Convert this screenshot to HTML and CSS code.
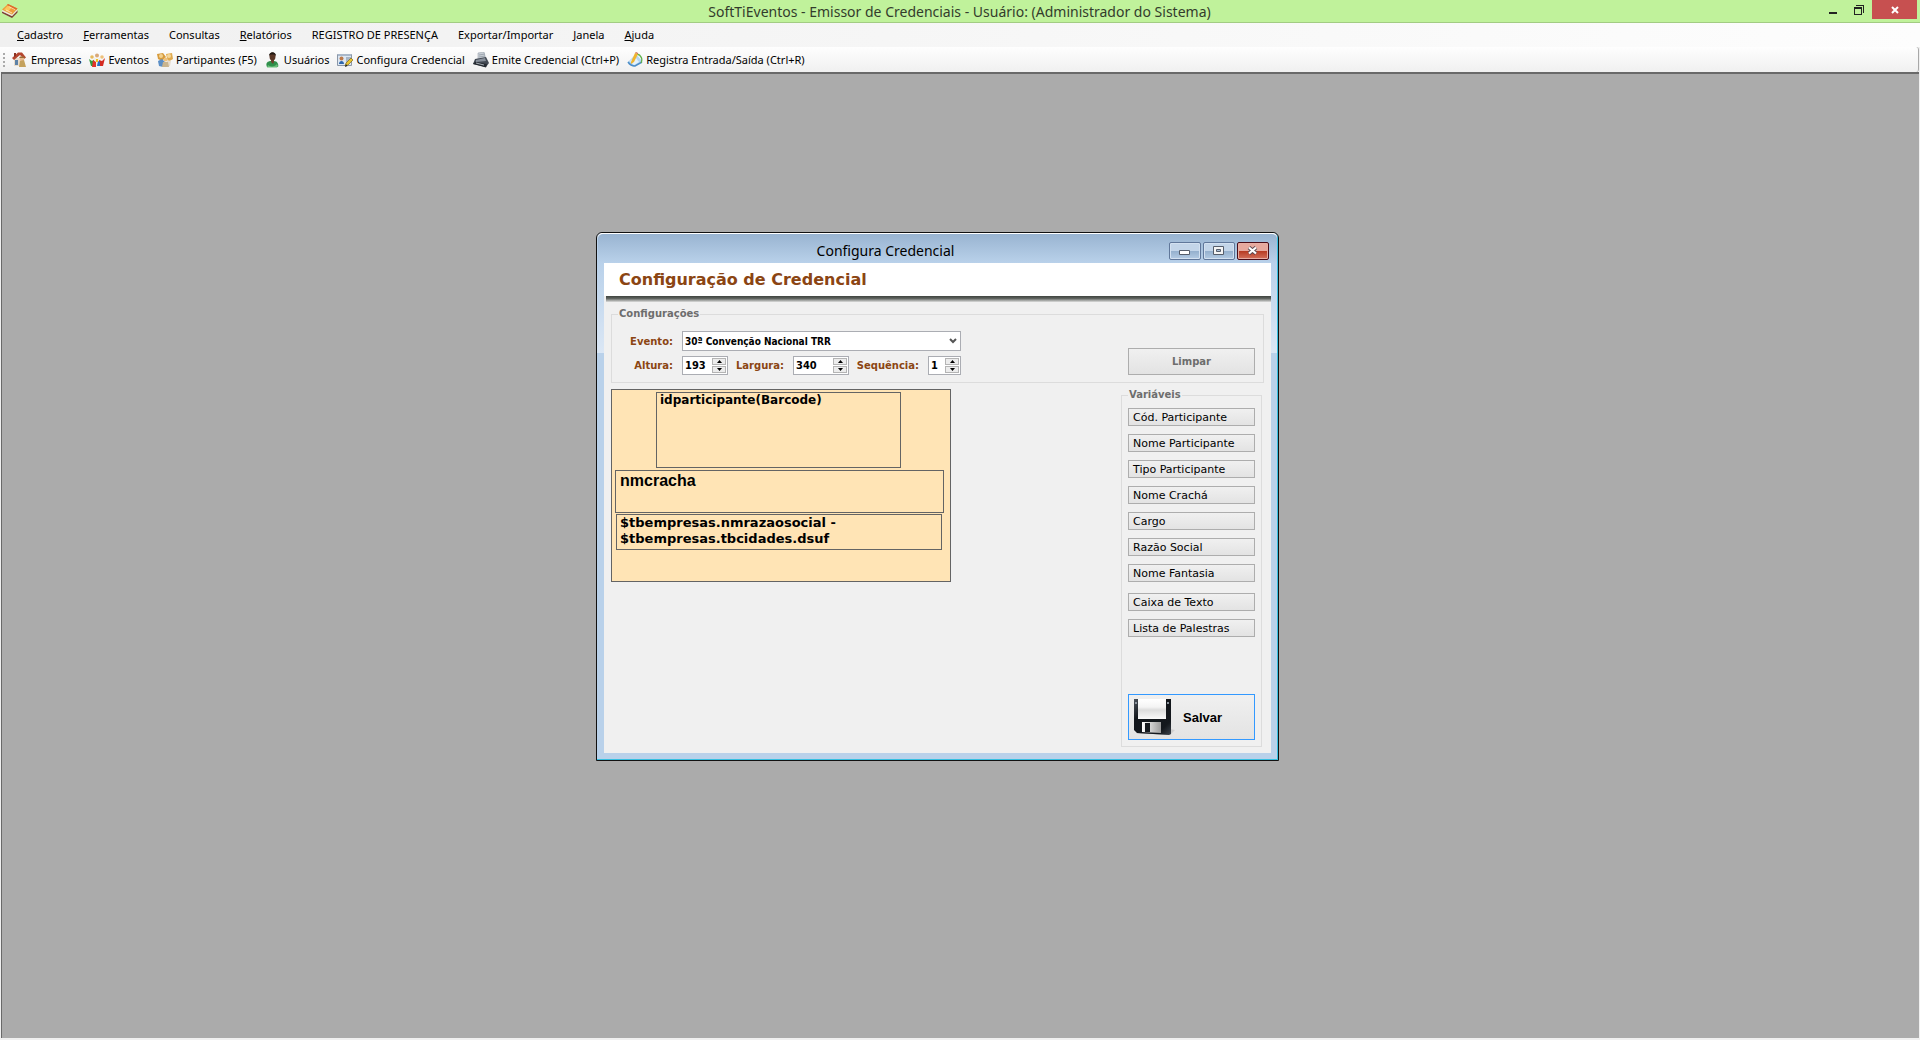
FILE: index.html
```html
<!DOCTYPE html>
<html lang="pt-BR">
<head>
<meta charset="utf-8">
<title>SoftTiEventos - Emissor de Credenciais</title>
<link rel="stylesheet" href="styles.css">
</head>
<body>
<div class="app">
  <header class="titlebar">
    <svg class="app-icon" viewBox="0 0 16 16" aria-hidden="true">
      <path d="M0 8l10 5 5.500-6v2.500L10 15 0 10z" fill="#7c4038"/>
      <path d="M0 7l10 4.500L15.500 6v1.500L10 13 0 8.500z" fill="#f4e2da"/>
      <path d="M0 6.500L6 1l9.500 4.500L10 11.500z" fill="#ee9d3c"/>
      <path d="M2 6.500l4-4 4 2-4 4z" fill="#fbc65c"/>
      <path d="M4 7l6 3M7 3.500l6 3" stroke="#fff0c8" stroke-width=".8"/>
      <path d="M6 1l9.500 4.500-1.200 1.300L5 2z" fill="#dd6b30"/>
    </svg>
    <h1 class="app-title">SoftTiEventos - Emissor de Credenciais - Usuário: (Administrador do Sistema)</h1>
    <div class="app-controls">
      <button class="app-btn" type="button" aria-label="Minimizar">
        <svg viewBox="0 0 10 10"><path d="M1 7h8v2H1z" fill="#222"/></svg>
      </button>
      <button class="app-btn" type="button" aria-label="Restaurar">
        <svg viewBox="0 0 10 10"><path d="M2 0h8v8H9V1H2z" fill="#222"/><path d="M0 2h8v8H0zm1 2v5h6V4z" fill="#222" fill-rule="evenodd"/></svg>
      </button>
      <button class="app-btn app-close" type="button" aria-label="Fechar">
        <svg viewBox="0 0 10 10"><path d="M2 2l6 6M8 2L2 8" stroke="#fff" stroke-width="2"/></svg>
      </button>
    </div>
  </header>

  <nav class="menubar">
    <a href="#"><u>C</u>adastro</a>
    <a href="#"><u>F</u>erramentas</a>
    <a href="#">Consultas</a>
    <a href="#"><u>R</u>elatórios</a>
    <a href="#">REGISTRO DE PRESENÇA</a>
    <a href="#">Exportar/Importar</a>
    <a href="#"><u>J</u>anela</a>
    <a href="#"><u>A</u>juda</a>
  </nav>

  <div class="toolbar">
    <span class="grip"></span>
    <button class="tool" type="button">
      <svg viewBox="0 0 16 16"><path d="M2 6h9v8H2z" fill="#e9dccb"/><path d="M0 6l6-5.500h4l4 5-2 1.500-4-4-6 5z" fill="#b5452e"/><path d="M2 1h2v3L2 5z" fill="#8c3324"/><path d="M3 8h3v5H3z" fill="#5d82a8"/><circle cx="10" cy="7" r="2.300" fill="#e8b98e"/><path d="M7 15l1-6 4-1 2 7z" fill="#c4a15c"/><path d="M8 4.500h4l1 1.500H7z" fill="#9c6b35"/></svg>
      Empresas</button>
    <button class="tool" type="button">
      <svg viewBox="0 0 16 16"><circle cx="3" cy="5" r="1.800" fill="#e5b95c"/><circle cx="8" cy="3.500" r="2" fill="#d8a878"/><circle cx="13" cy="5" r="1.800" fill="#eec07a"/><path d="M0 7l3 2 3-2-1 7H2z" fill="#2f9e3d"/><path d="M5 5l3 2 3-2 1 9H5z" fill="#f2efe6"/><path d="M10 8l3 1 3-3-2 8h-4z" fill="#d42a20"/><path d="M4 8l3 2v5H3z" fill="#e0342a"/><path d="M9 9l2 1v4H8z" fill="#2770c4"/><path d="M7 7h2v3H7z" fill="#f5c41c"/></svg>
      Eventos</button>
    <button class="tool" type="button">
      <svg viewBox="0 0 16 16"><path d="M0 2l6-1 3 4-4 4-4-2z" fill="#d79b3c"/><path d="M9 2l6-1 1 6-5 3z" fill="#e0aa4e"/><circle cx="4" cy="4" r="2" fill="#f3d190"/><circle cx="12" cy="4" r="2" fill="#f5d79a"/><path d="M1 9l4-2 3 3-2 5-4-1z" fill="#5b8ec6"/><path d="M10 8l4 1-1 5-4 1z" fill="#e7dccd"/><circle cx="8.500" cy="7.500" r="2" fill="#efc27d"/><path d="M6 10h5l1 5H5z" fill="#c9b48e"/></svg>
      Partipantes (F5)</button>
    <button class="tool" type="button">
      <svg viewBox="0 0 16 16"><path d="M2 15c-2-4 1-6 4-6h3c3 0 5 3 4 6z" fill="#2f8f4b"/><path d="M3 13c2 2 7 2 9-1l1 2-1 1.500H2z" fill="#69bd79"/><path d="M6 7h3v3l-1 2-2-2z" fill="#6e432d"/><ellipse cx="7.500" cy="4.500" rx="3" ry="4" fill="#5a3726"/><path d="M4 4c0-5 7-5 7 0L9.500 2.500h-4z" fill="#221812"/></svg>
      Usuários</button>
    <button class="tool" type="button">
      <svg viewBox="0 0 16 16"><path d="M.5 2.500h14v11H.5z" fill="#dde7f2" stroke="#8a97a8"/><path d="M1 2h13v2H1z" fill="#a9b8ca"/><circle cx="4.500" cy="6.500" r="2" fill="#bd7a4a"/><path d="M2 12c0-4 5-4 5 0z" fill="#2e66ad"/><path d="M9 6h5M9 8h4M9 10h3" stroke="#73849a"/><path d="M8 14l1-3 5-5 2 2-5 5z" fill="#e7c32f" stroke="#6f5b14" stroke-width=".6"/><path d="M8 15l1-3 1.500 2z" fill="#222"/></svg>
      Configura Credencial</button>
    <button class="tool" type="button">
      <svg viewBox="0 0 16 16"><path d="M5 1l6-1 2 8H5z" fill="#c9cfd6" stroke="#9aa3ad" stroke-width=".6"/><path d="M6 3l6-1M6 5l6-1" stroke="#8a949e" stroke-width=".7"/><path d="M2 7l11-2 3 6-3 4L0 12z" fill="#434a54"/><path d="M3 8l9-2 1 3-10 1z" fill="#878f9a"/><path d="M0 12l2-2 12 2-1 3.500z" fill="#252a31"/><path d="M3 11l8 2" stroke="#c9d0d7" stroke-width=".8"/></svg>
      Emite Credencial (Ctrl+P)</button>
    <button class="tool" type="button">
      <svg viewBox="0 0 16 16"><path d="M1 10l8-8 6 7-8 6z" fill="#b3d6f2"/><path d="M1 10c2 3 4 4 7 4l7-4" fill="none" stroke="#4c8dc7" stroke-width="1.500"/><path d="M10 2c4 1 6 5 4 9" fill="none" stroke="#5fb04e" stroke-width="1.300"/><path d="M3 9l5-4 4 5-5 3z" fill="#e4f1fb"/><path d="M4 10l4-9 3 1-4 8-3 2z" fill="#f0b52d"/><path d="M8 1l1-1 2 1v1z" fill="#d46a4c"/></svg>
      Registra Entrada/Saída (Ctrl+R)</button>
  </div>

  <main class="workspace">
    <section class="window" aria-labelledby="window-title">
      <header class="window-bar">
        <h2 class="window-title" id="window-title">Configura Credencial</h2>
        <button class="win-btn" type="button" aria-label="Minimizar">
          <svg viewBox="0 0 12 10"><path d="M.5 4.500h10v4H.5z" fill="#fff" stroke="#555d6b"/></svg>
        </button>
        <button class="win-btn" type="button" aria-label="Maximizar">
          <svg viewBox="0 0 12 10"><path d="M.5.500h10v8H.5z" fill="#f4f4f4" stroke="#555d6b"/><path d="M3.500 3.500h4v2h-4z" fill="#a8bdd6" stroke="#555d6b"/></svg>
        </button>
        <button class="win-btn win-close" type="button" aria-label="Fechar">
          <svg viewBox="0 0 12 10"><path d="M2 1.500l7 6M9 1.500l-7 6" stroke="#5c4a52" stroke-width="4"/><path d="M2 1.500l7 6M9 1.500l-7 6" stroke="#fff" stroke-width="2.200"/></svg>
        </button>
      </header>

      <form class="window-body">
        <h3 class="heading">Configuração de Credencial</h3>
        <div class="heading-shadow"></div>

        <fieldset class="group settings">
          <legend>Configurações</legend>
          <div class="settings-row">
            <div class="fields">
              <label for="evento">Evento:</label>
              <span class="picker">
                <select id="evento"><option>30ª Convenção Nacional TRR</option></select>
                <svg viewBox="0 0 8 6"><path d="M1 1l3 3 3-3" fill="none" stroke="#555" stroke-width="2"/></svg>
              </span>
              <label for="altura">Altura:</label>
              <span class="spin">
                <input id="altura" type="number" value="193">
                <span class="spin-buttons">
                  <button type="button" aria-label="Aumentar altura"><svg viewBox="0 0 5 3"><path d="M0 3h5L2.500 0z"/></svg></button>
                  <button type="button" aria-label="Diminuir altura"><svg viewBox="0 0 5 3"><path d="M0 0h5L2.500 3z"/></svg></button>
                </span>
              </span>
              <label for="largura">Largura:</label>
              <span class="spin">
                <input id="largura" type="number" value="340">
                <span class="spin-buttons">
                  <button type="button" aria-label="Aumentar largura"><svg viewBox="0 0 5 3"><path d="M0 3h5L2.500 0z"/></svg></button>
                  <button type="button" aria-label="Diminuir largura"><svg viewBox="0 0 5 3"><path d="M0 0h5L2.500 3z"/></svg></button>
                </span>
              </span>
              <label for="sequencia">Sequência:</label>
              <span class="spin">
                <input id="sequencia" type="number" value="1">
                <span class="spin-buttons">
                  <button type="button" aria-label="Aumentar sequência"><svg viewBox="0 0 5 3"><path d="M0 3h5L2.500 0z"/></svg></button>
                  <button type="button" aria-label="Diminuir sequência"><svg viewBox="0 0 5 3"><path d="M0 0h5L2.500 3z"/></svg></button>
                </span>
              </span>
            </div>
            <button class="push clear" type="button">Limpar</button>
          </div>
        </fieldset>

        <div class="designer">
          <div class="badge">
            <div class="badge-field field-code">idparticipante(Barcode)</div>
            <div class="badge-field field-name">nmcracha</div>
            <div class="badge-field field-company">$tbempresas.nmrazaosocial - $tbempresas.tbcidades.dsuf</div>
          </div>

          <fieldset class="group variables">
            <legend>Variáveis</legend>
            <div class="variable-list">
              <button class="push variable" type="button">Cód. Participante</button>
              <button class="push variable" type="button">Nome Participante</button>
              <button class="push variable" type="button">Tipo Participante</button>
              <button class="push variable" type="button">Nome Crachá</button>
              <button class="push variable" type="button">Cargo</button>
              <button class="push variable" type="button">Razão Social</button>
              <button class="push variable" type="button">Nome Fantasia</button>
            </div>
            <div class="variable-list extras">
              <button class="push variable" type="button">Caixa de Texto</button>
              <button class="push variable" type="button">Lista de Palestras</button>
            </div>
            <button class="push save" type="submit">
              <svg viewBox="0 0 42 38" aria-hidden="true">
                <defs>
                  <linearGradient id="disk" x1="0" x2="1" y2="1"><stop offset="0" stop-color="#4c535b"/><stop offset=".3" stop-color="#12161b"/><stop offset=".8" stop-color="#14181d"/><stop offset="1" stop-color="#3d444d"/></linearGradient>
                  <linearGradient id="label" x2="0" y2="1"><stop offset="0" stop-color="#fff"/><stop offset=".4" stop-color="#f4f4f4"/><stop offset=".55" stop-color="#dcdcdc"/><stop offset="1" stop-color="#fafafa"/></linearGradient>
                  <linearGradient id="shutter"><stop offset="0" stop-color="#fff"/><stop offset="1" stop-color="#9b9b9b"/></linearGradient>
                  <linearGradient id="cast"><stop offset="0" stop-color="#555"/><stop offset="1" stop-color="#aaa" stop-opacity=".3"/></linearGradient>
                </defs>
                <path d="M3 35l34 2 5-5-5-1z" fill="url(#cast)"/>
                <path d="M1 1h37v35l-2 1-32-2-3-3z" fill="url(#disk)"/>
                <path d="M5 1h28v20H5z" fill="url(#label)"/>
                <path d="M2 4h2v2H2zM34 4h2v2h-2z" fill="#8d959e"/>
                <path d="M9 24h19v11l-19-1z" fill="url(#shutter)"/>
                <path d="M12 25h5v9h-5z" fill="#15191e"/>
              </svg>
              <span>Salvar</span>
            </button>
          </fieldset>
        </div>
      </form>
    </section>
  </main>
</div>
</body>
</html>
```
FILE: styles.css
```css
* { box-sizing: border-box; }

body {
  margin: 0;
  font-family: "Noto Sans", "Open Sans", sans-serif;
  font-size: 11px;
  color: #000;
}

button { font: inherit; color: inherit; padding: 0; border: 0; background: none; }
h1, h2, h3 { margin: 0; font-weight: 400; }
svg { display: block; }

.app { display: flex; flex-direction: column; min-height: 100vh; background: #f0f0f0; }

/* Main title bar */
.titlebar {
  display: grid;
  grid-template-columns: 1fr auto 1fr;
  height: 23px;
  padding: 0 3px 0 2px;
  background: #c0f29b;
  border-bottom: 1px solid #a2cc83;
}
.app-icon { width: 16px; height: 16px; margin-top: 3px; }
.app-title { font-size: 14px; line-height: 23px; color: #333c2c; }
.app-controls { display: flex; justify-content: flex-end; align-items: flex-start; }
.app-btn { display: flex; align-items: center; justify-content: center; width: 26px; height: 19px; }
.app-btn svg { width: 10px; height: 10px; }
.app-close { width: 45px; background: #c75050; }

/* Menu and toolbar */
.menubar {
  display: flex;
  gap: 20px;
  height: 24px;
  padding: 0 17px;
  line-height: 24px;
  background: linear-gradient(90deg, #f0f0f0, #fdfdfd);
}
.menubar a { color: #000; text-decoration: none; white-space: nowrap; }

.toolbar {
  display: flex;
  align-items: center;
  gap: 8px;
  height: 25px;
  margin-right: 1px;
  padding-left: 3px;
  background: linear-gradient(#fefefe, #f0f0f0);
  border-right: 1px solid #a8a8a8;
  border-radius: 0 3px 3px 0;
}
.grip {
  width: 2px;
  height: 14px;
  margin-right: -1px;
  background: repeating-linear-gradient(#aaa 0 2px, transparent 2px 4px);
}
.tool { display: flex; align-items: center; gap: 3px; white-space: nowrap; }
.tool svg { width: 16px; height: 16px; }

/* Workspace that holds the child windows */
.workspace {
  position: relative;
  flex: 1;
  margin: 0 1px 2px;
  background: #ababab;
  border-top: 2px solid #696969;
  border-left: 1px solid #696969;
}

.window {
  position: absolute;
  left: 594px;
  top: 158px;
  display: flex;
  flex-direction: column;
  width: 683px;
  height: 529px;
  padding: 0 7px 7px;
  border: 1px solid #111;
  border-radius: 6px 6px 0 0;
  background: linear-gradient(#b9d1ea 30px, #dbe7f5 120px, #b9d1ea 120px);
  box-shadow: inset -1px -1px #35bfe0, inset 0 1px #fff;
}
.window-bar {
  display: flex;
  align-items: center;
  gap: 2px;
  height: 30px;
  margin: 0 -6px;
  padding: 4px 8px 0 6px;
  border-top: 1px solid #fff;
  background: linear-gradient(#99b4d1, #b9d1ea);
  border-radius: 5px 5px 0 0;
}
.window-title { flex: 1; font-size: 14px; text-align: center; }
.win-btn {
  display: flex;
  align-items: center;
  justify-content: center;
  width: 32px;
  height: 18px;
  border: 1px solid #60779a;
  border-radius: 2px;
  background: linear-gradient(#c3d5e9 50%, #94afcd 50%, #b4cbe4);
  box-shadow: inset 0 0 0 1px #d3e1f1;
}
.win-btn svg { width: 12px; height: 10px; }
.win-close {
  border-color: #4a0d18;
  background: linear-gradient(#e6a99e 50%, #b63a22 50%, #d4715c);
  box-shadow: inset 0 0 0 1px #e7aea4;
}

/* Form */
.window-body {
  display: flex;
  flex: 1;
  flex-direction: column;
  padding-bottom: 6px;
  background: #f0f0f0;
  font-family: "DejaVu Sans", sans-serif;
  font-size: 10px;
}
.heading {
  height: 33px;
  padding-left: 15px;
  background: #fff;
  color: #8b4513;
  font-size: 16px;
  font-weight: 700;
  line-height: 34px;
}
.heading-shadow {
  height: 6px;
  margin-left: 2px;
  background: linear-gradient(#3f443f, #5c605c 40%, #dcdcdc);
}

.group { min-width: 0; margin: 0; border: 1px solid #dcdcdc; }
.group legend {
  padding: 0 1px;
  color: #6d6d6d;
  font-weight: 700;
  line-height: 12px;
}

.settings { margin: 6px 7px; padding: 11px 8px 7px 6px; }
.settings-row { display: flex; align-items: flex-end; justify-content: space-between; }
.fields {
  display: grid;
  grid-template-columns: 61px 46px 59px 56px 73px 33px;
  column-gap: 3px;
  row-gap: 5px;
  align-items: center;
}
.fields label {
  padding-right: 6px;
  color: #8b4513;
  font-weight: 700;
  text-align: right;
  white-space: nowrap;
}
.picker { display: grid; grid-column: 2 / -1; align-items: center; }
.picker select, .picker svg { grid-area: 1 / 1; }
.picker select {
  appearance: none;
  width: 100%;
  height: 20px;
  padding: 0 2px;
  border: 1px solid #abadb3;
  border-radius: 0;
  background: #fff;
  color: #000;
  font-family: "DejaVu Sans Condensed", "DejaVu Sans", sans-serif;
  font-size: 10px;
  font-weight: 700;
}
.picker svg { justify-self: end; width: 8px; height: 6px; margin-right: 4px; pointer-events: none; }

.spin { display: flex; height: 19px; padding: 1px; border: 1px solid #abadb3; background: #fff; }
.spin input {
  appearance: textfield;
  flex: 1;
  min-width: 0;
  padding: 0 1px;
  border: 0;
  background: none;
  color: #000;
  font-family: "DejaVu Sans Condensed", "DejaVu Sans", sans-serif;
  font-size: 11px;
  font-weight: 700;
}
.spin input::-webkit-inner-spin-button { display: none; }
.spin-buttons { display: grid; grid-template-rows: 1fr 1fr; gap: 1px; width: 14px; }
.spin-buttons button {
  display: flex;
  align-items: center;
  justify-content: center;
  border: 1px solid #b4b4b4;
  background: #ececec;
}
.spin-buttons svg { width: 5px; height: 3px; }

.push {
  border: 1px solid #adadad;
  background: linear-gradient(#f0f0f0, #e3e3e3);
}
.clear { width: 127px; height: 27px; color: #6d6d6d; font-weight: 700; }

.designer { display: flex; flex: 1; justify-content: space-between; padding: 0 9px 0 7px; }

.badge {
  position: relative;
  width: 340px;
  height: 193px;
  border: 1px solid #646464;
  background: #ffe4b5;
}
.badge-field { position: absolute; padding: 0 4px; border: 1px solid #646464; font-weight: 700; }
.field-code { left: 44px; top: 2px; width: 245px; height: 76px; padding: 0 3px; font-size: 12px; line-height: 15px; }
.field-name { left: 3px; top: 80px; width: 329px; height: 43px; font: 700 16px/20px "Liberation Sans", Arial, sans-serif; }
.field-company { left: 4px; top: 124px; width: 326px; height: 36px; padding: 0 3px; font-size: 13px; line-height: 16px; }

.variables { display: flex; flex-direction: column; width: 141px; padding: 7px 6px 6px; }
.variable-list { display: flex; flex-direction: column; gap: 8px; }
.extras { margin-top: 11px; }
.variable { height: 18px; padding: 0 4px; font-size: 11px; text-align: left; }
.save {
  display: flex;
  align-items: center;
  gap: 8px;
  height: 46px;
  margin-top: auto;
  padding: 0 4px;
  border-color: #3399ff;
  font: 700 13px "Liberation Sans", Arial, sans-serif;
}
.save svg { width: 42px; height: 38px; }
```
